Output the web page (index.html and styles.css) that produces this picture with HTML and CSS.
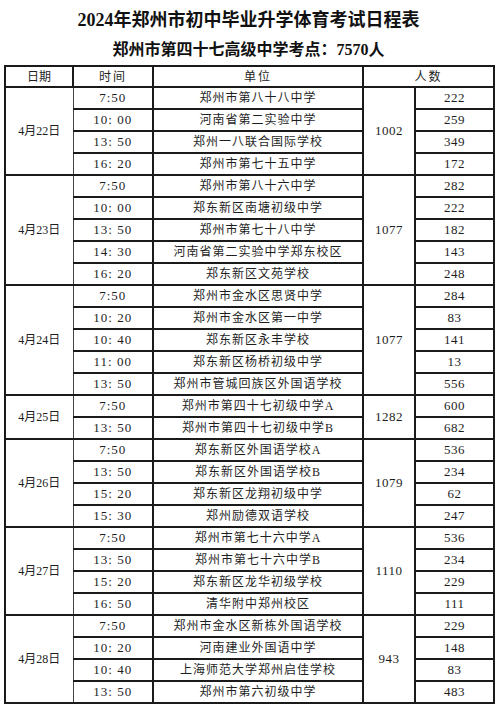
FILE: index.html
```html
<!DOCTYPE html>
<html lang="zh">
<head>
<meta charset="utf-8">
<title>2024年郑州市初中毕业升学体育考试日程表</title>
<link rel="stylesheet" href="styles.css">
</head>
<body>
<div class="page">
  <h1 class="title">2024年郑州市初中毕业升学体育考试日程表</h1>
  <h2 class="subtitle">郑州市第四十七高级中学考点：7570人</h2>
  <table class="sched">
    <colgroup>
      <col class="c-date"><col class="c-time"><col class="c-unit"><col class="c-total"><col class="c-num">
    </colgroup>
    <thead>
      <tr><th class="date">日期</th><th class="time">时间</th><th class="unit">单位</th><th colspan="2" class="num">人数</th></tr>
    </thead>
    <tbody>
      <tr><td rowspan="4" class="date">4月22日</td><td class="time">7:50</td><td class="unit">郑州市第八十八中学</td><td rowspan="4" class="total">1002</td><td class="num">222</td></tr>
      <tr><td class="time">10: 00</td><td class="unit">河南省第二实验中学</td><td class="num">259</td></tr>
      <tr><td class="time">13: 50</td><td class="unit">郑州一八联合国际学校</td><td class="num">349</td></tr>
      <tr><td class="time">16: 20</td><td class="unit">郑州市第七十五中学</td><td class="num">172</td></tr>

      <tr><td rowspan="5" class="date">4月23日</td><td class="time">7:50</td><td class="unit">郑州市第八十六中学</td><td rowspan="5" class="total">1077</td><td class="num">282</td></tr>
      <tr><td class="time">10: 00</td><td class="unit">郑东新区南塘初级中学</td><td class="num">222</td></tr>
      <tr><td class="time">13: 50</td><td class="unit">郑州市第七十八中学</td><td class="num">182</td></tr>
      <tr><td class="time">14: 30</td><td class="unit">河南省第二实验中学郑东校区</td><td class="num">143</td></tr>
      <tr><td class="time">16: 20</td><td class="unit">郑东新区文苑学校</td><td class="num">248</td></tr>

      <tr><td rowspan="5" class="date">4月24日</td><td class="time">7:50</td><td class="unit">郑州市金水区思贤中学</td><td rowspan="5" class="total">1077</td><td class="num">284</td></tr>
      <tr><td class="time">10: 20</td><td class="unit">郑州市金水区第一中学</td><td class="num">83</td></tr>
      <tr><td class="time">10: 40</td><td class="unit">郑东新区永丰学校</td><td class="num">141</td></tr>
      <tr><td class="time">11: 00</td><td class="unit">郑东新区杨桥初级中学</td><td class="num">13</td></tr>
      <tr><td class="time">13: 50</td><td class="unit">郑州市管城回族区外国语学校</td><td class="num">556</td></tr>

      <tr><td rowspan="2" class="date">4月25日</td><td class="time">7:50</td><td class="unit">郑州市第四十七初级中学A</td><td rowspan="2" class="total">1282</td><td class="num">600</td></tr>
      <tr><td class="time">13: 50</td><td class="unit">郑州市第四十七初级中学B</td><td class="num">682</td></tr>

      <tr><td rowspan="4" class="date">4月26日</td><td class="time">7:50</td><td class="unit">郑东新区外国语学校A</td><td rowspan="4" class="total">1079</td><td class="num">536</td></tr>
      <tr><td class="time">13: 50</td><td class="unit">郑东新区外国语学校B</td><td class="num">234</td></tr>
      <tr><td class="time">15: 20</td><td class="unit">郑东新区龙翔初级中学</td><td class="num">62</td></tr>
      <tr><td class="time">15: 30</td><td class="unit">郑州励德双语学校</td><td class="num">247</td></tr>

      <tr><td rowspan="4" class="date">4月27日</td><td class="time">7:50</td><td class="unit">郑州市第七十六中学A</td><td rowspan="4" class="total">1110</td><td class="num">536</td></tr>
      <tr><td class="time">13: 50</td><td class="unit">郑州市第七十六中学B</td><td class="num">234</td></tr>
      <tr><td class="time">15: 20</td><td class="unit">郑东新区龙华初级学校</td><td class="num">229</td></tr>
      <tr><td class="time">16: 50</td><td class="unit">清华附中郑州校区</td><td class="num">111</td></tr>

      <tr><td rowspan="4" class="date">4月28日</td><td class="time">7:50</td><td class="unit">郑州市金水区新栋外国语学校</td><td rowspan="4" class="total">943</td><td class="num">229</td></tr>
      <tr><td class="time">10: 20</td><td class="unit">河南建业外国语中学</td><td class="num">148</td></tr>
      <tr><td class="time">10: 40</td><td class="unit">上海师范大学郑州启佳学校</td><td class="num">83</td></tr>
      <tr><td class="time">13: 50</td><td class="unit">郑州市第六初级中学</td><td class="num">483</td></tr>
    </tbody>
  </table>
</div>
</body>
</html>
```
FILE: styles.css
```css
html, body {
  margin: 0;
  padding: 0;
  background: #ffffff;
}

.page {
  width: 500px;
  padding: 0 0 0 4px;
  box-sizing: border-box;
  font-family: "Liberation Serif", "Noto Sans CJK SC", serif;
  color: #1e1e1e;
}

.title {
  margin: 0;
  width: 489px;
  text-align: center;
  font-size: 18px;
  line-height: 40px;
  font-weight: bold;
  color: #111;
}

.subtitle {
  margin: 0 0 5px 0;
  width: 489px;
  text-align: center;
  font-size: 16px;
  line-height: 20px;
  font-weight: bold;
  color: #111;
}

.sched {
  border-collapse: collapse;
  table-layout: fixed;
  width: 489px;
  border: 2px solid #222;
}

.c-date { width: 68px; }
.c-time { width: 80px; }
.c-unit { width: 210px; }
.c-total { width: 52px; }
.c-num { width: 79px; }

.sched th,
.sched td {
  border: 2px solid #1a1a1a;
  padding: 0;
  height: 20px;
  text-align: center;
  vertical-align: middle;
  font-weight: normal;
  font-size: 12px;
  line-height: 14px;
  white-space: nowrap;
  overflow: hidden;
}

.sched thead th {
  height: 19px;
  letter-spacing: 2px;
  font-size: 12px;
}

.sched .date {
  border-right: 1px solid #444;
  font-size: 12px;
  letter-spacing: 0;
}

.sched td.time {
  font-size: 13px;
  letter-spacing: 1px;
  border-left: 1px solid #444;
}

.sched td.unit {
  font-size: 12px;
  letter-spacing: 1px;
}

.sched td.total,
.sched td.num {
  font-size: 13px;
  letter-spacing: 0.5px;
}
```
